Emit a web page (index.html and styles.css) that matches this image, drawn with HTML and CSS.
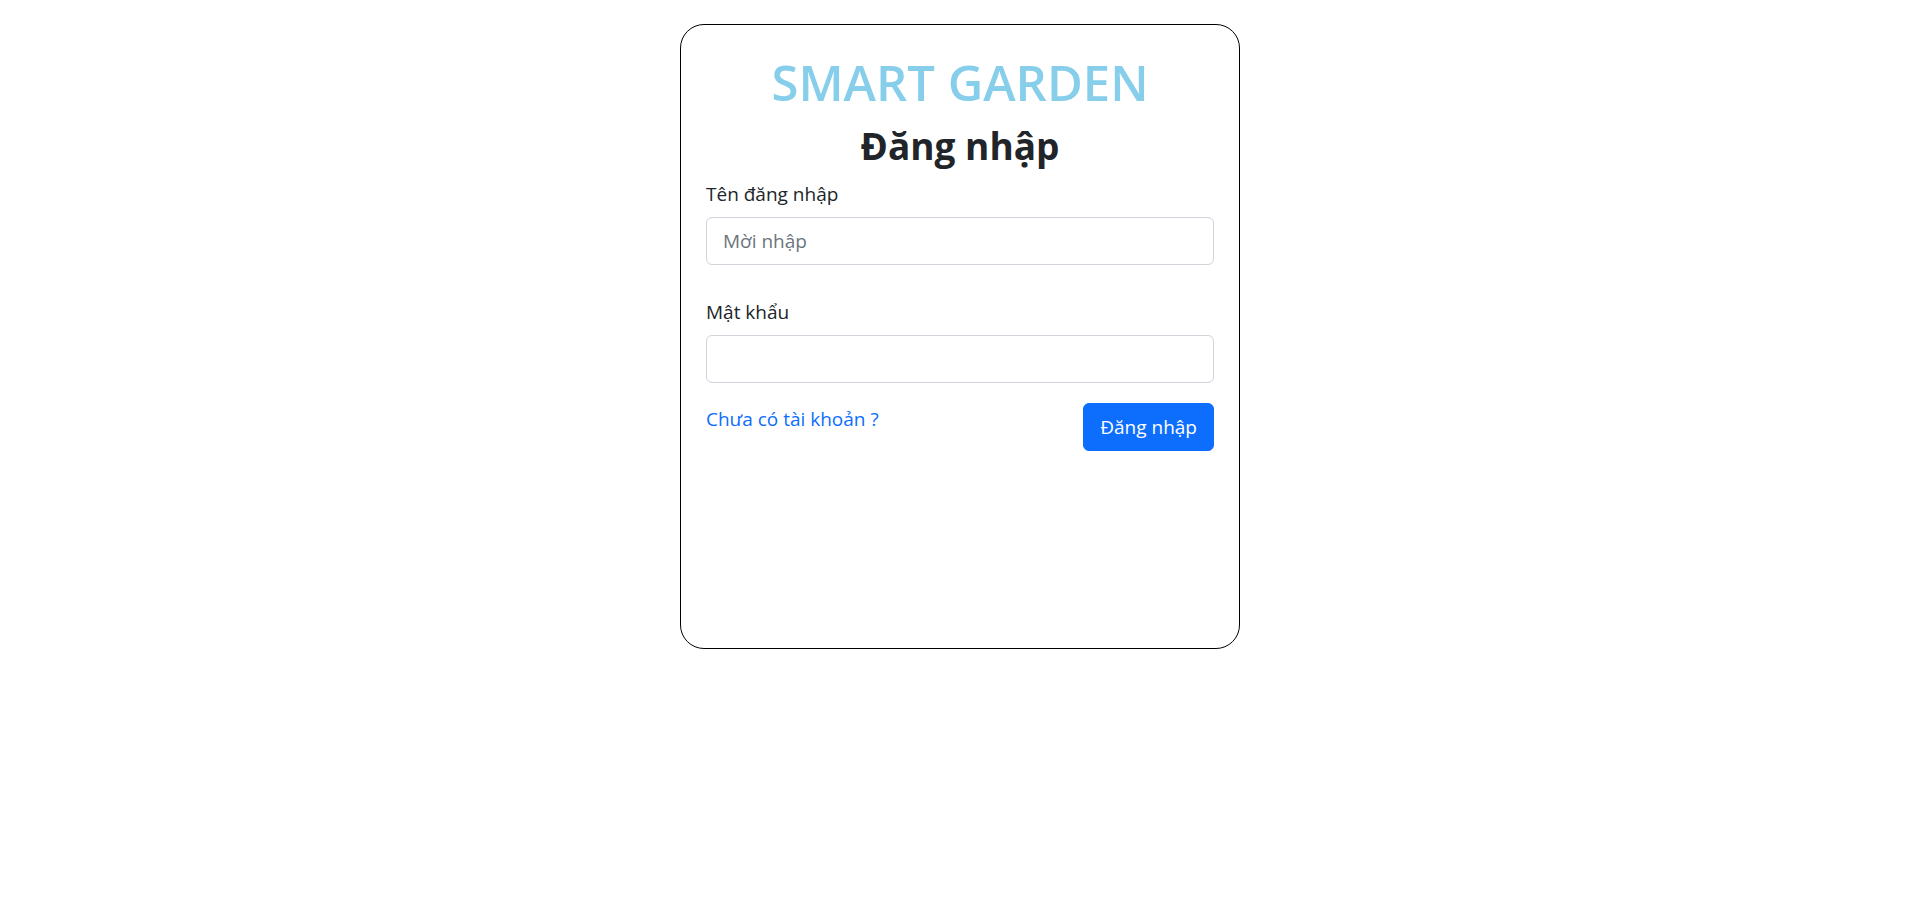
FILE: index.html
```html
<!DOCTYPE html>
<html lang="vi">
<head>
<meta charset="utf-8">
<title>Smart Garden - Đăng nhập</title>
<link rel="stylesheet" href="styles.css">
</head>
<body>
<div class="page">
  <form class="card">
    <h1 class="brand">SMART GARDEN</h1>
    <h2 class="heading">Đăng nhập</h2>
    <div class="field">
      <label class="label" for="username">Tên đăng nhập</label>
      <input class="input" id="username" type="text" placeholder="Mời nhập">
    </div>
    <div class="field">
      <label class="label" for="password">Mật khẩu</label>
      <input class="input" id="password" type="password">
    </div>
    <div class="actions">
      <a class="link" href="#">Chưa có tài khoản ?</a>
      <button class="btn" type="button">Đăng nhập</button>
    </div>
  </form>
</div>
</body>
</html>
```

FILE: styles.css
```css
* { box-sizing: border-box; }
html, body { margin: 0; padding: 0; background: #fff; }
body {
  font-family: "Open Sans", "Noto Sans", sans-serif;
  color: #212529;
}
.page {
  display: flex;
  justify-content: center;
  padding-top: 24px;
}
.card {
  width: 560px;
  height: 625px;
  border: 1px solid #000;
  border-radius: 24px;
  padding: 26px 25px 0;
  display: flex;
  flex-direction: column;
}
.brand {
  margin: 0;
  text-align: center;
  font-size: 49px;
  line-height: 62px;
  font-weight: 600;
  color: #87ceeb;
}
.heading {
  margin: 11px 0 0;
  text-align: center;
  font-size: 37px;
  line-height: 44px;
  font-weight: 700;
  color: #212529;
}
.field {
  display: flex;
  flex-direction: column;
  margin-top: 12px;
}
.field + .field { margin-top: 33px; }
.label {
  font-size: 19px;
  line-height: 28px;
  margin-bottom: 9px;
}
.input {
  height: 48px;
  border: 1px solid #ced4da;
  border-radius: 6px;
  padding: 0 16px;
  font-family: inherit;
  font-size: 19px;
  color: #212529;
  outline: none;
}
.input::placeholder { color: #6c757d; }
.actions {
  display: flex;
  justify-content: space-between;
  align-items: flex-start;
  margin-top: 20px;
}
.link {
  margin-top: 2px;
  font-size: 19px;
  line-height: 28px;
  color: #0d6efd;
  text-decoration: none;
}
.btn {
  height: 48px;
  padding: 0 16px;
  border: 1px solid #0d6efd;
  border-radius: 6px;
  background: #0d6efd;
  color: #fff;
  font-family: inherit;
  font-size: 19px;
  cursor: pointer;
}
```
